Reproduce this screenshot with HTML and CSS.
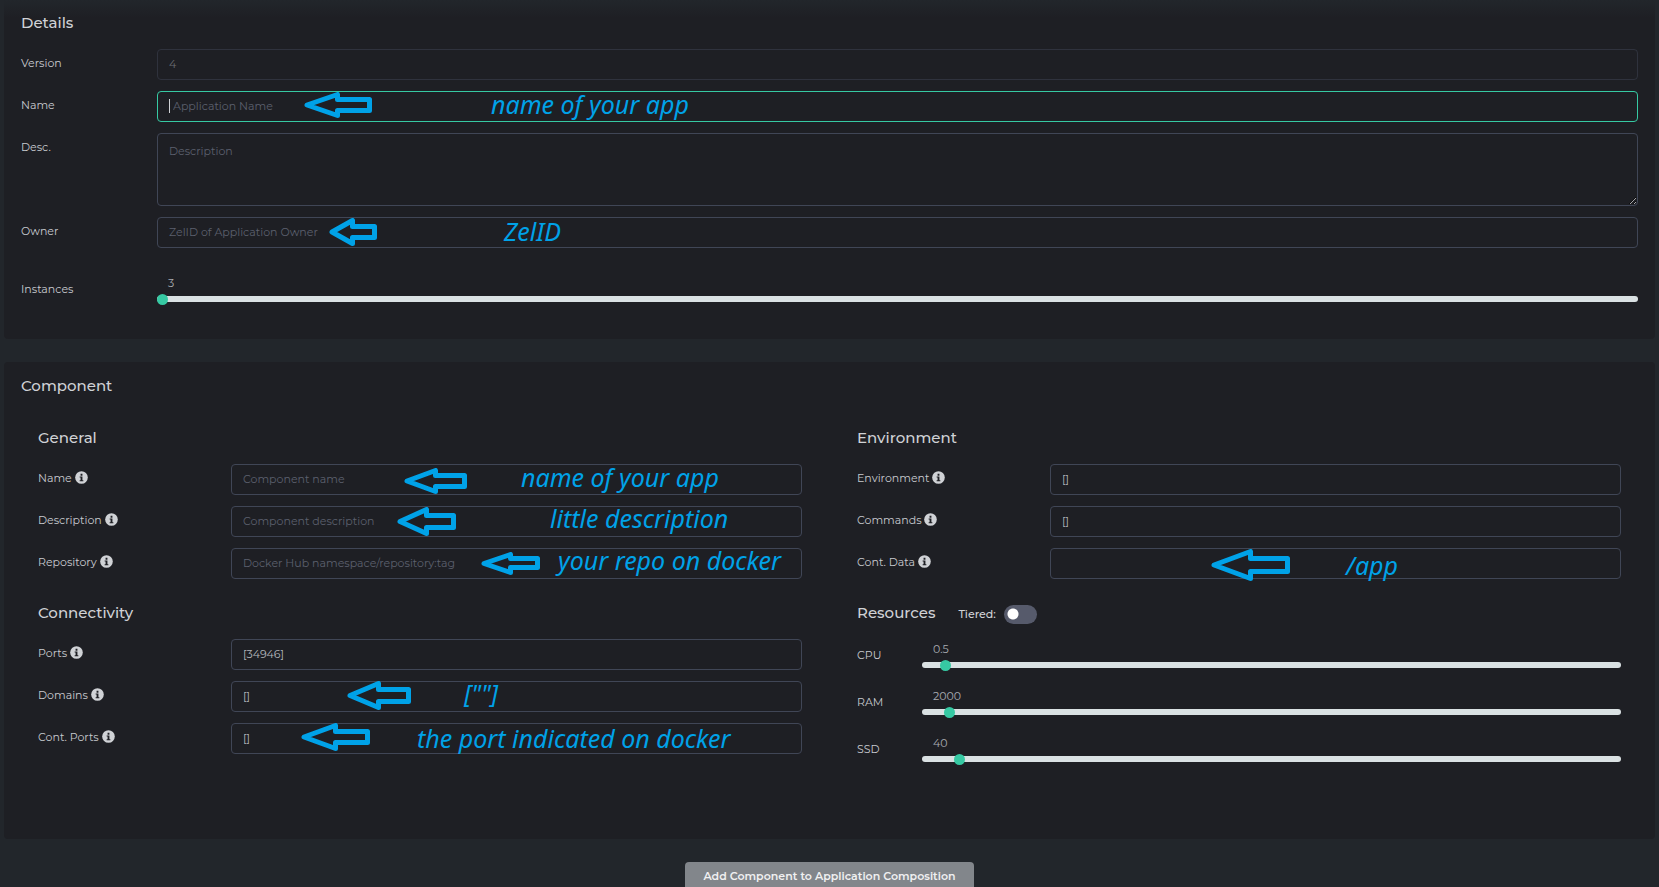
FILE: index.html
```
<!DOCTYPE html>
<html lang="en">
<head>
<meta charset="utf-8">
<meta name="viewport" content="width=device-width, initial-scale=1">
<title>Register Application</title>
<link rel="stylesheet" href="styles.css">
</head>
<body>
<svg class="defs" aria-hidden="true">
  <symbol id="info" viewBox="0 0 14 14">
    <circle cx="7" cy="7" r="6.8" fill="#d0d2d6"/>
    <path d="M6 3h2v2H6zM5 6h3v4h1v1H5v-1h1V7H5z" fill="#1e1f24"/>
  </symbol>
</svg>
<form class="page">
  <section class="card details">
    <h2 class="title">Details</h2>
    <div class="rows">
      <div class="row">
        <label class="label" for="version">Version</label>
        <div class="field"><input class="input" id="version" type="text" value="4" disabled></div>
      </div>
      <div class="row">
        <label class="label" for="app-name">Name</label>
        <div class="field">
          <input class="input active" id="app-name" type="text" placeholder="Application Name">
          <span class="caret"></span>
          <svg class="arrow at-app" width="68" height="26"><path d="M3 13L33.5 2.5V7.5H65.5V18.5H33.5V23.5Z"/></svg>
          <span class="note at-app-text">name of your app</span>
        </div>
      </div>
      <div class="row">
        <label class="label" for="desc">Desc.</label>
        <div class="field"><textarea class="input area" id="desc" placeholder="Description"></textarea></div>
      </div>
      <div class="row">
        <label class="label" for="owner">Owner</label>
        <div class="field">
          <input class="input" id="owner" type="text" placeholder="ZelID of Application Owner">
          <svg class="arrow at-owner" width="48" height="28"><path d="M3 14L23.5 2.5V8.5H45.5V19.5H23.5V25.5Z"/></svg>
          <span class="note at-owner-text">ZelID</span>
        </div>
      </div>
      <div class="row instances">
        <label class="label" for="instances">Instances</label>
        <div class="slider"><output class="value" for="instances">3</output><input class="range" id="instances" type="range" min="3" max="100" value="3"></div>
      </div>
    </div>
  </section>

  <section class="card component">
    <h2 class="title">Component</h2>
    <div class="columns">
      <div class="column">
        <section class="group">
          <h3 class="title">General</h3>
          <div class="rows">
            <div class="row">
              <label class="label" for="c-name">Name <svg class="info"><use href="#info"/></svg></label>
              <div class="field">
                <input class="input" id="c-name" type="text" placeholder="Component name">
                <svg class="arrow at-name" width="63" height="26"><path d="M3 13L31.5 2.5V7.5H60.5V18.5H31.5V23.5Z"/></svg>
                <span class="note at-name-text">name of your app</span>
              </div>
            </div>
            <div class="row">
              <label class="label" for="c-desc">Description <svg class="info"><use href="#info"/></svg></label>
              <div class="field">
                <input class="input" id="c-desc" type="text" placeholder="Component description">
                <svg class="arrow at-desc" width="59" height="29"><path d="M3 14.5L29.5 2.5V8.5H56.5V20.5H29.5V26.5Z"/></svg>
                <span class="note at-desc-text">little description</span>
              </div>
            </div>
            <div class="row">
              <label class="label" for="c-repo">Repository <svg class="info"><use href="#info"/></svg></label>
              <div class="field">
                <input class="input" id="c-repo" type="text" placeholder="Docker Hub namespace/repository:tag">
                <svg class="arrow at-repo" width="59" height="23"><path d="M3 11.5L29.5 2.5V6.5H56.5V15.5H29.5V20.5Z"/></svg>
                <span class="note at-repo-text">your repo on docker</span>
              </div>
            </div>
          </div>
        </section>
        <section class="group">
          <h3 class="title">Connectivity</h3>
          <div class="rows">
            <div class="row">
              <label class="label" for="c-ports">Ports <svg class="info"><use href="#info"/></svg></label>
              <div class="field"><input class="input" id="c-ports" type="text" value="[34946]"></div>
            </div>
            <div class="row">
              <label class="label" for="c-domains">Domains <svg class="info"><use href="#info"/></svg></label>
              <div class="field">
                <input class="input" id="c-domains" type="text" value="[]">
                <svg class="arrow at-domains" width="64" height="29"><path d="M3 14.5L31.5 2.5V8.5H61.5V20.5H31.5V26.5Z"/></svg>
                <span class="note at-domains-text">[""]</span>
              </div>
            </div>
            <div class="row">
              <label class="label" for="c-cports">Cont. Ports <svg class="info"><use href="#info"/></svg></label>
              <div class="field">
                <input class="input" id="c-cports" type="text" value="[]">
                <svg class="arrow at-cports" width="69" height="28"><path d="M3 14L34.5 2.5V8.5H66.5V19.5H34.5V25.5Z"/></svg>
                <span class="note at-cports-text">the port indicated on docker</span>
              </div>
            </div>
          </div>
        </section>
      </div>

      <div class="column">
        <section class="group">
          <h3 class="title">Environment</h3>
          <div class="rows">
            <div class="row">
              <label class="label" for="c-env">Environment <svg class="info"><use href="#info"/></svg></label>
              <div class="field"><input class="input" id="c-env" type="text" value="[]"></div>
            </div>
            <div class="row">
              <label class="label" for="c-cmd">Commands <svg class="info"><use href="#info"/></svg></label>
              <div class="field"><input class="input" id="c-cmd" type="text" value="[]"></div>
            </div>
            <div class="row">
              <label class="label" for="c-data">Cont. Data <svg class="info"><use href="#info"/></svg></label>
              <div class="field">
                <input class="input" id="c-data" type="text">
                <svg class="arrow at-data" width="79" height="32"><path d="M3 16L39.5 2.5V9.5H76.5V22.5H39.5V29.5Z"/></svg>
                <span class="note at-data-text">/app</span>
              </div>
            </div>
          </div>
        </section>
        <section class="group resources">
          <div class="heading">
            <h3 class="title">Resources</h3>
            <label class="tiered" for="tiered">Tiered: <input class="switch" id="tiered" type="checkbox"></label>
          </div>
          <div class="sliders">
            <div class="row">
              <label class="label" for="cpu">CPU</label>
              <div class="slider"><output class="value" for="cpu">0.5</output><input class="range" id="cpu" type="range" min="0.1" max="15" step="0.1" value="0.5"></div>
            </div>
            <div class="row">
              <label class="label" for="ram">RAM</label>
              <div class="slider"><output class="value" for="ram">2000</output><input class="range" id="ram" type="range" min="100" max="59000" step="100" value="2000"></div>
            </div>
            <div class="row">
              <label class="label" for="ssd">SSD</label>
              <div class="slider"><output class="value" for="ssd">40</output><input class="range" id="ssd" type="range" min="1" max="840" value="40"></div>
            </div>
          </div>
        </section>
      </div>
    </div>
  </section>

  <button class="add" type="button">Add Component to Application Composition</button>
</form>
</body>
</html>
```
FILE: styles.css
```
* { box-sizing: border-box; }

html { scrollbar-width: none; }

body {
  margin: 0;
  background: #22262b;
  color: #c8cacf;
  font: 11px/18px Montserrat, Inter, sans-serif;
  color-scheme: dark;
}

.defs { display: none; }

.page {
  display: flex;
  flex-direction: column;
  gap: 23px;
  height: 100vh;
  overflow: hidden;
  padding: 0 4px;
}

.card {
  flex: none;
  background: #1e1f24;
  border-radius: 4px;
}

.details {
  padding: 13px 17px 32px;
  background: linear-gradient(#22262b, #1e1f24 18px);
  border-radius: 0 0 4px 4px;
}

.component { padding: 14px 17px 72px; }

.title {
  margin: 0;
  color: #d0d2d6;
  font-size: 15px;
  font-weight: 500;
  line-height: 20px;
}

.rows {
  display: flex;
  flex-direction: column;
  gap: 11px;
  margin-top: 16px;
}

.row {
  display: grid;
  grid-template-columns: 193px 1fr;
}

.details .row { grid-template-columns: 136px 1fr; }
.resources .row { grid-template-columns: 65px 1fr; }
.instances { margin-top: 16px; }

.columns {
  display: grid;
  grid-template-columns: 1fr 1fr;
  gap: 55px;
  margin-top: 32px;
  padding: 0 17px;
}

.column {
  display: flex;
  flex-direction: column;
  gap: 24px;
}

.label { padding-top: 5px; }

.info {
  width: 13px;
  height: 13px;
  vertical-align: -2px;
}

.field {
  position: relative;
  display: flex;
}

.input {
  width: 100%;
  height: 31px;
  margin: 0;
  padding: 0 11px 1px;
  border: 1px solid #404656;
  border-radius: 4px;
  outline: 0;
  background: transparent;
  color: #b4b7bd;
  font: inherit;
}

.input::placeholder {
  color: #5c606e;
  opacity: 1;
}

.input:disabled { opacity: .5; }

.active {
  padding-left: 15px;
  border-color: #36c9a3;
}

.caret {
  position: absolute;
  left: 12px;
  top: 8px;
  width: 1px;
  height: 14px;
  background: #d0d2d6;
}

.area {
  height: 73px;
  padding-top: 8px;
  resize: vertical;
}

.slider {
  display: flex;
  flex-direction: column;
}

.value {
  height: 16px;
  padding-left: 11px;
  color: #a9acb2;
  line-height: 16px;
}

.range {
  width: 100%;
  height: 16px;
  margin: 0;
  appearance: none;
  background: transparent;
}

.range::-webkit-slider-runnable-track {
  height: 6px;
  border-radius: 3px;
  background: #dae1e3;
}

.range::-webkit-slider-thumb {
  appearance: none;
  width: 11px;
  height: 11px;
  margin-top: -2px;
  border-radius: 50%;
  background: #36c9a3;
}

.heading {
  display: flex;
  gap: 23px;
}

.tiered {
  display: flex;
  align-items: center;
  gap: 8px;
  height: 22px;
  margin-bottom: -2px;
  color: #d0d2d6;
  font-weight: 500;
}

.switch {
  width: 33px;
  height: 19px;
  margin: 0;
  appearance: none;
  border-radius: 10px;
  background: radial-gradient(circle at 9px 9px, #fff 5px, #565a6b 6px);
}

.sliders {
  display: flex;
  flex-direction: column;
  gap: 15px;
  margin-top: 18px;
}

.add {
  flex: none;
  align-self: center;
  height: 30px;
  padding: 0 18px 2px;
  border: 0;
  border-radius: 4px;
  background: #82868b;
  color: #f0f0f1;
  font: inherit;
  font-weight: 600;
}

/* Handwritten guidance laid over the fields */
.arrow,
.note {
  position: absolute;
  pointer-events: none;
}

.arrow {
  fill: none;
  stroke: #00a2e8;
  stroke-width: 5;
  stroke-linejoin: round;
}

.note {
  color: #00a2e8;
  font: italic 25px/30px "Comic Sans MS", "Noto Sans", sans-serif;
  white-space: nowrap;
}

.at-app { left: 147px; top: 1px; }
.at-app-text { left: 334px; top: -2px; }
.at-owner { left: 172px; top: 1px; }
.at-owner-text { left: 347px; top: -1px; }
.at-name { left: 173px; top: 4px; }
.at-name-text { left: 290px; top: -2px; }
.at-desc { left: 166px; top: 1px; }
.at-desc-text { left: 319px; top: -3px; }
.at-repo { left: 250px; top: 4px; }
.at-repo-text { left: 327px; top: -3px; }
.at-domains { left: 116px; top: 0; }
.at-domains-text { left: 233px; top: -3px; }
.at-cports { left: 70px; top: 0; }
.at-cports-text { left: 186px; top: 0; }
.at-data { left: 161px; top: 1px; }
.at-data-text { left: 296px; top: 2px; }
```
